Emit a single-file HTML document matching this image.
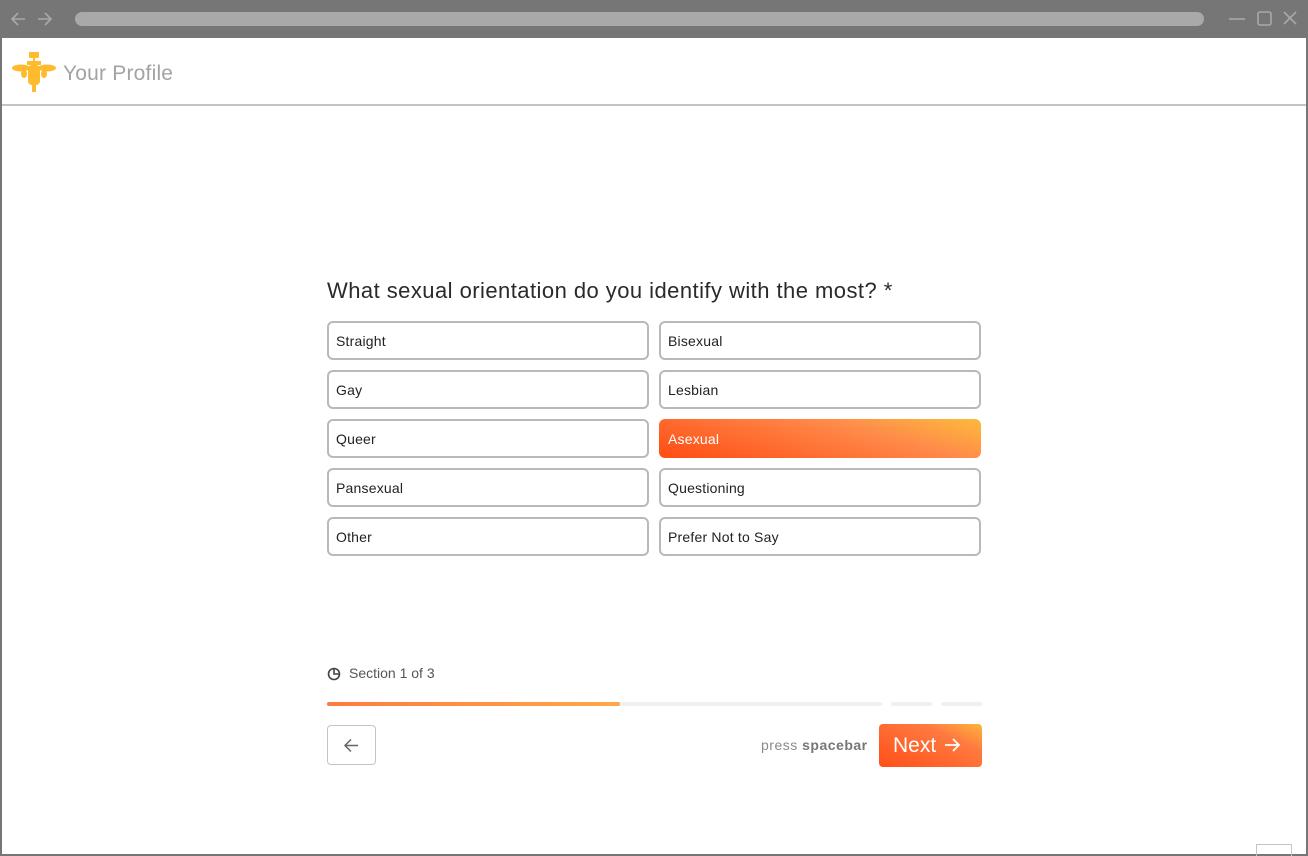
<!DOCTYPE html>
<html><head><meta charset="utf-8"><style>
*{box-sizing:border-box;margin:0;padding:0}
html,body{width:1308px;height:856px;overflow:hidden;background:#767676;font-family:"Liberation Sans",sans-serif}
.win{position:absolute;left:2px;top:38px;width:1304px;height:816px;background:#fff}
.url{position:absolute;left:75px;top:12px;width:1129px;height:14px;border-radius:7px;background:#a9a9a9}
.hdr{position:absolute;left:0;top:0;width:1304px;height:68px;border-bottom:2px solid #c4c4c4}
.title{position:absolute;left:61px;top:24px;font-size:21px;color:#a3a3a3;letter-spacing:.2px}
.q{position:absolute;left:325px;top:240px;font-size:22px;color:#2a2a2a;letter-spacing:.45px}
.opt{position:absolute;width:322px;height:39px;border:2px solid #b9b9b9;border-radius:6px;font-size:14px;color:#222;padding:10px 0 0 7px;letter-spacing:.2px}
.sel{border:none;background:linear-gradient(195deg,#fdbb3c 0%,#ff8a4a 35%,#ff4c14 100%);color:#fff;padding-left:9px;padding-top:12px}
.sec{position:absolute;left:347px;top:627px;font-size:14px;color:#555}
.bar{position:absolute;top:664px;height:4px;border-radius:2px;background:#f0f0f0}
.back{position:absolute;left:325px;top:687px;width:49px;height:40px;border:1.5px solid #c4c4c4;border-radius:4px}
.press{position:absolute;left:759px;top:699px;font-size:14px;color:#8a8a8a;letter-spacing:.5px}
.next{position:absolute;left:877px;top:686px;width:103px;height:43px;border-radius:4px;background:linear-gradient(205deg,#fdb63c 0%,#ff7a40 30%,#ff4f18 100%);color:#fff;font-size:21px;padding:10px 0 0 14px}
</style></head><body>
<svg style="position:absolute;left:0;top:0" width="1308" height="38">
<g stroke="#a9a9a9" stroke-width="1.6" fill="none"><path d="M25 19H12M18 13l-6 6 6 6"/><path d="M38 19h13M45 13l6 6-6 6"/>
<path d="M1229 19h16"/><rect x="1258" y="12" width="13" height="13" rx="2"/><path d="M1284 12l12 12M1296 12l-12 12"/></g></svg>
<div class="url"></div>
<div class="win">
<div class="hdr">
<svg style="position:absolute;left:10px;top:14px" width="44" height="44" viewBox="0 0 44 44" fill="#fdbb2d">
<rect x="17" y="0" width="10" height="6" rx="1"/><rect x="21" y="6" width="2" height="3"/><rect x="15" y="9" width="14" height="4"/>
<ellipse cx="9" cy="16" rx="9" ry="3.5"/><ellipse cx="35" cy="16" rx="9" ry="3.5"/><ellipse cx="12" cy="22" rx="3" ry="4"/><ellipse cx="32" cy="22" rx="3" ry="4"/>
<rect x="16" y="13" width="12" height="20" rx="4"/><rect x="20" y="33" width="4" height="7"/></svg>
<div class="title">Your Profile</div></div>
<div class="q">What sexual orientation do you identify with the most? *</div>
<div class="opt" style="left:325px;top:283px">Straight</div>
<div class="opt" style="left:657px;top:283px">Bisexual</div>
<div class="opt" style="left:325px;top:332px">Gay</div>
<div class="opt" style="left:657px;top:332px">Lesbian</div>
<div class="opt" style="left:325px;top:381px">Queer</div>
<div class="opt sel" style="left:657px;top:381px">Asexual</div>
<div class="opt" style="left:325px;top:430px">Pansexual</div>
<div class="opt" style="left:657px;top:430px">Questioning</div>
<div class="opt" style="left:325px;top:479px">Other</div>
<div class="opt" style="left:657px;top:479px">Prefer Not to Say</div>
<svg style="position:absolute;left:325px;top:629px" width="14" height="14" viewBox="0 0 14 14" fill="none" stroke="#444" stroke-width="1.6"><circle cx="7" cy="7" r="5.5"/><path d="M7 1.5V7h5.5"/></svg>
<div class="sec">Section 1 of 3</div>
<div class="bar" style="left:325px;width:555px"></div>
<div class="bar" style="left:325px;width:293px;background:linear-gradient(90deg,#ff7a40,#ffa848)"></div>
<div class="bar" style="left:889px;width:41px"></div>
<div class="bar" style="left:939px;width:41px"></div>
<div class="back"><svg style="position:absolute;left:15px;top:11px" width="17" height="17" viewBox="0 0 17 17" fill="none" stroke="#666" stroke-width="1.5"><path d="M15 8.5H2M8 2.5l-6 6 6 6"/></svg></div>
<div class="press">press <b style="color:#777">spacebar</b></div>
<div class="next">Next <svg style="position:relative;top:1px;left:2px" width="17" height="16" viewBox="0 0 17 16" fill="none" stroke="#fff" stroke-width="1.8"><path d="M1 8h14M9 2l6 6-6 6"/></svg></div>
<div style="position:absolute;left:1254px;top:806px;width:36px;height:12px;border:1px solid #c4c4c4;border-bottom:none"></div>
</div>
</body></html>
